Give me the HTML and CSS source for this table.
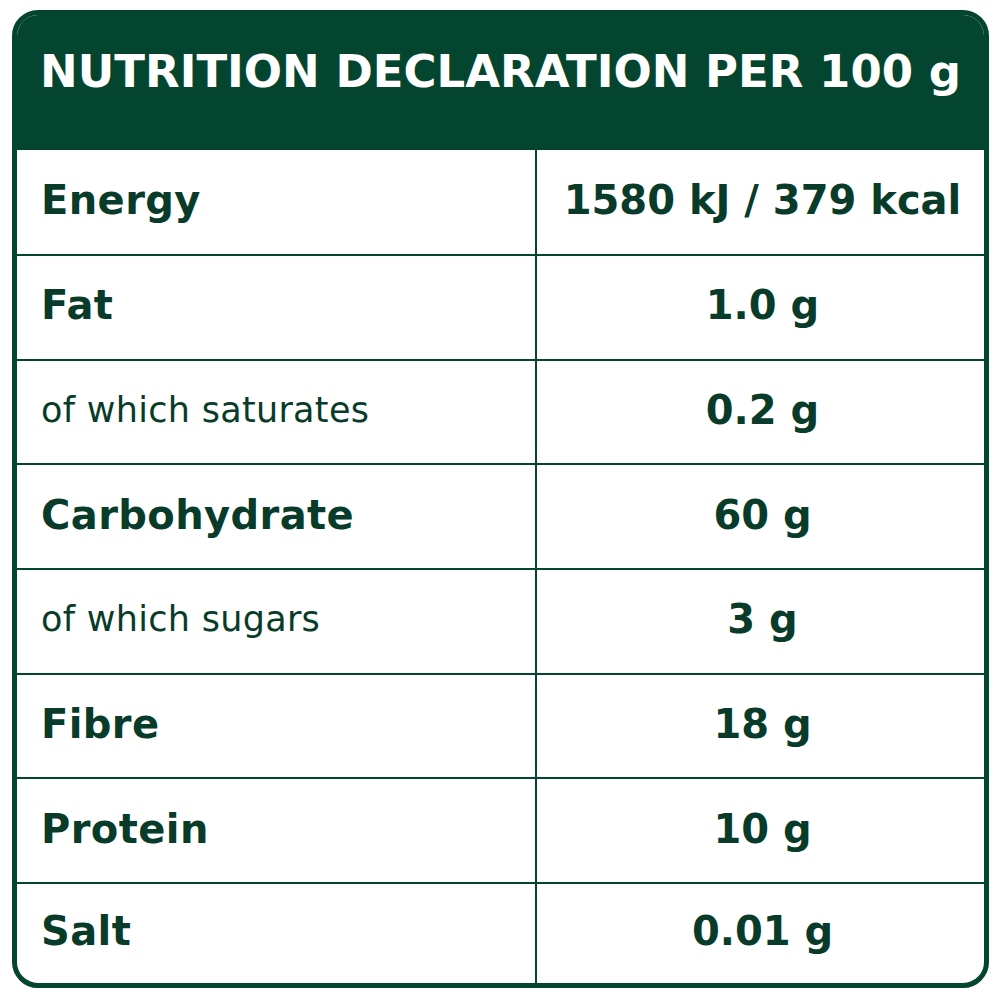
FILE: index.html
```html
<!DOCTYPE html>
<html lang="en">
<head>
<meta charset="utf-8">
<title>Nutrition Declaration</title>
<link rel="stylesheet" href="styles.css">
</head>
<body>
<div class="label">
  <div class="header">NUTRITION DECLARATION PER 100 g</div>
  <div class="table">
    <div class="row"><div class="name">Energy</div><div class="value">1580 kJ / 379 kcal</div></div>
    <div class="row"><div class="name">Fat</div><div class="value">1.0 g</div></div>
    <div class="row"><div class="name sub">of which saturates</div><div class="value">0.2 g</div></div>
    <div class="row"><div class="name">Carbohydrate</div><div class="value">60 g</div></div>
    <div class="row"><div class="name sub">of which sugars</div><div class="value">3 g</div></div>
    <div class="row"><div class="name">Fibre</div><div class="value">18 g</div></div>
    <div class="row"><div class="name">Protein</div><div class="value">10 g</div></div>
    <div class="row"><div class="name">Salt</div><div class="value">0.01 g</div></div>
  </div>
</div>
</body>
</html>
```
FILE: styles.css
```css
html, body {
  margin: 0;
  padding: 0;
  background: #ffffff;
}
body {
  padding: 10px 11px 12px 12px;
  font-family: "DejaVu Sans", Verdana, sans-serif;
}
.label {
  width: 977px;
  height: 978px;
  box-sizing: border-box;
  border: 5px solid #03452f;
  border-radius: 26px;
  overflow: hidden;
  display: flex;
  flex-direction: column;
  background: #ffffff;
}
.header {
  height: 135px;
  flex: none;
  background: #03452f;
  color: #ffffff;
  font-weight: bold;
  font-size: 45px;
  display: flex;
  align-items: center;
  justify-content: center;
  padding-bottom: 22px;
  box-sizing: border-box;
}
.table {
  flex: 1;
  display: grid;
  grid-template-rows: 104px repeat(6, 104.67px) 1fr;
}
.row {
  display: grid;
  grid-template-columns: 520px 1fr;
  border-top: 2px solid #03452f;
}
.row:first-child {
  border-top: none;
}
.name, .value {
  display: flex;
  align-items: center;
  color: #083b29;
  font-weight: bold;
  font-size: 40px;
  padding-bottom: 4px;
}
.name {
  padding-left: 24px;
  letter-spacing: 0.4px;
  border-right: 2px solid #03452f;
}
.name.sub {
  font-weight: normal;
  font-size: 35px;
  letter-spacing: 0.3px;
}
.value {
  justify-content: center;
  padding-left: 4px;
}
```
